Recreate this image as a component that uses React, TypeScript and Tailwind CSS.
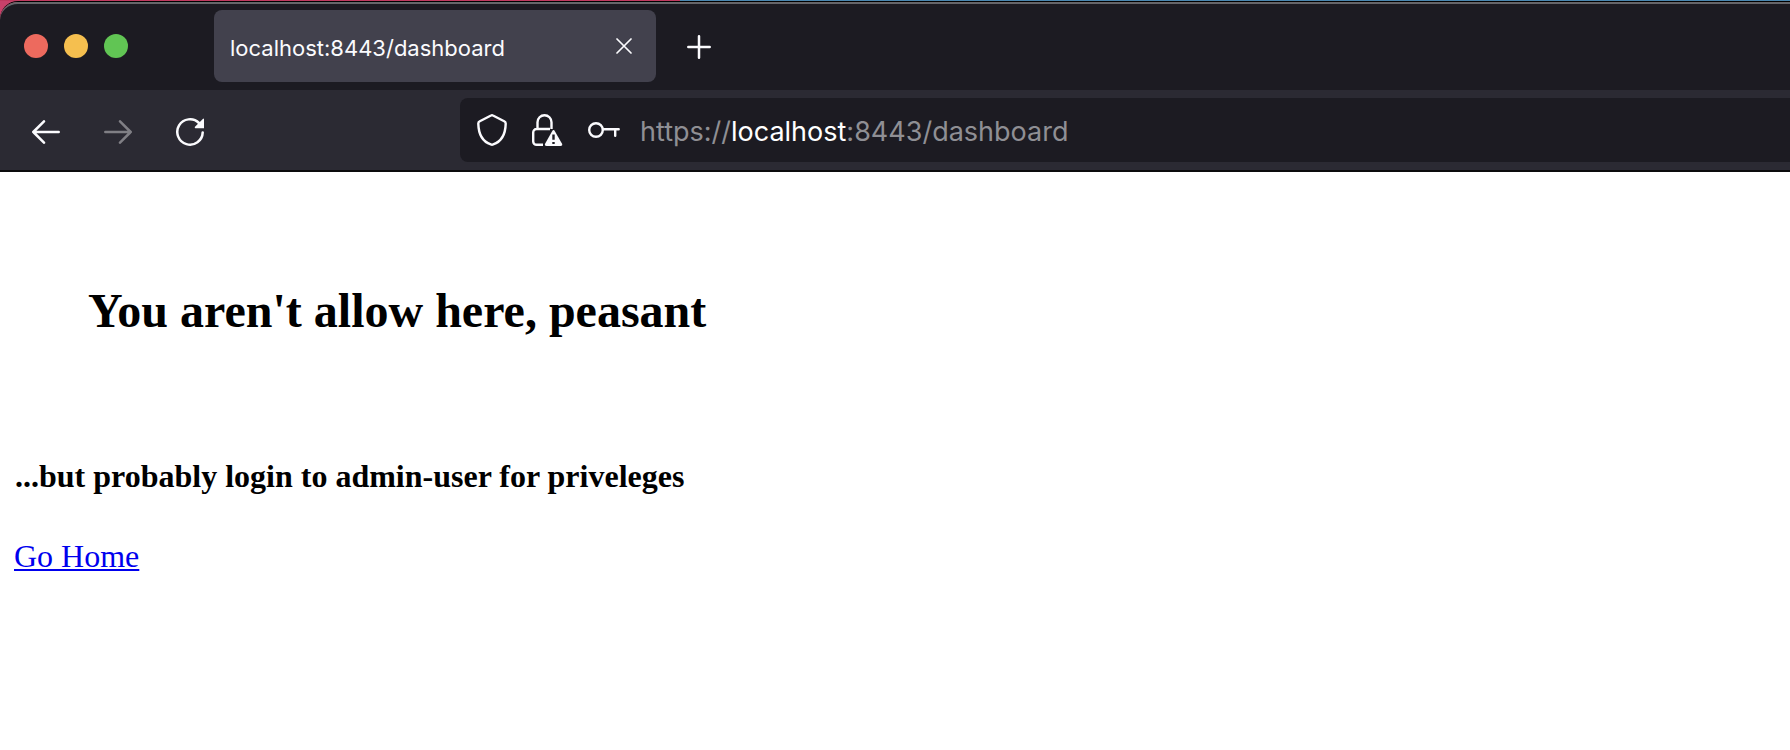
import React from "react";

type IconProps = { className?: string };

function BackIcon({ className }: IconProps) {
  return (
    <svg viewBox="0 0 28 24" className={className} fill="none" stroke="currentColor" strokeWidth="2.5" strokeLinecap="round" strokeLinejoin="round" aria-hidden="true">
      <path d="M26.700 12H1.300M12 1.300 1.300 12 12 22.700" />
    </svg>
  );
}

function ForwardIcon({ className }: IconProps) {
  return (
    <svg viewBox="0 0 28 24" className={className} fill="none" stroke="currentColor" strokeWidth="2.5" strokeLinecap="round" strokeLinejoin="round" aria-hidden="true">
      <path d="M1.3 12h25.4M16 1.3 26.7 12 16 22.7" />
    </svg>
  );
}

function ReloadIcon({ className }: IconProps) {
  return (
    <svg viewBox="0 0 28 28" className={className} fill="none" aria-hidden="true">
      <path d="M26.7 14.4A12.7 12.7 0 1 1 23 5" stroke="currentColor" strokeWidth="2.5" strokeLinecap="round" />
      <path d="M28 1v9.200h-8.600q-1.200-.3-.4-1.400L26.800.9Q27.600.2 28 1Z" fill="currentColor" />
    </svg>
  );
}

function ShieldIcon({ className }: IconProps) {
  return (
    <svg viewBox="0 0 30 32" className={className} fill="none" stroke="currentColor" strokeWidth="2.4" strokeLinejoin="round" aria-hidden="true">
      <path d="M15 1.2Q15.5 1.2 16 1.5L27.2 7.2Q28.8 8 28.7 9.6C28.5 18 26 27 16.2 30.4Q15 31 13.8 30.4C4 27 1.5 18 1.3 9.6Q1.2 8 2.8 7.2L14 1.5Q14.5 1.2 15 1.2Z" />
    </svg>
  );
}

function LockWarningIcon({ className }: IconProps) {
  return (
    <svg viewBox="0 0 32 32" className={className} fill="none" aria-hidden="true">
      <path d="M5.500 15V8.200a7 7 0 0 1 14 0V15M11 30.800H4.600A3.400 3.400 0 0 1 1.200 27.400V18.400A3.400 3.400 0 0 1 4.600 15H18" stroke="currentColor" strokeWidth="2.4" strokeLinejoin="round" />
      <path d="M20 17.400q1.500-2.600 3 0l6.900 12.200q1.200 2.400-1.500 2.400H14.700q-2.700 0-1.500-2.400Z" fill="currentColor" />
      <path d="M21.500 20.500v5.300M21.500 27.900v2.100" stroke="#1c1b22" strokeWidth="2.4" />
    </svg>
  );
}

function KeyIcon({ className }: IconProps) {
  return (
    <svg viewBox="0 0 32 16" className={className} fill="none" stroke="currentColor" strokeWidth="2.4" strokeLinecap="round" strokeLinejoin="round" aria-hidden="true">
      <circle cx="8" cy="8" r="6.8" />
      <path d="M15 7.200h15.700M27.200 7.200v6.500" />
    </svg>
  );
}

function CloseIcon({ className }: IconProps) {
  return (
    <svg viewBox="0 0 16 16" className={className} stroke="currentColor" strokeWidth="1.7" strokeLinecap="round" aria-hidden="true">
      <path d="m1 1 14 14M15 1 1 15" />
    </svg>
  );
}

function PlusIcon({ className }: IconProps) {
  return (
    <svg viewBox="0 0 24 24" className={className} stroke="currentColor" strokeWidth="2.5" strokeLinecap="round" aria-hidden="true">
      <path d="M12 1.3v21.400M1.300 12h21.400" />
    </svg>
  );
}

function TabStrip() {
  return (
    <div className="flex h-[88px] items-start rounded-tl-[18px] border-t-2 border-[#66666a] bg-[#1c1b22] pt-1.5 pl-6">
      <div className="mt-6 flex shrink-0 gap-4">
        <button aria-label="Close window" className="size-6 rounded-full bg-[#ed6a5e]" />
        <button aria-label="Minimize window" className="size-6 rounded-full bg-[#f5bf4f]" />
        <button aria-label="Zoom window" className="size-6 rounded-full bg-[#61c554]" />
      </div>
      <div className="ml-[86px] flex h-[72px] w-[442px] shrink-0 items-center justify-between rounded-lg bg-[#42414d] pr-6 pl-4">
        <span className="pt-1 text-[22px] leading-8">localhost:8443/dashboard</span>
        <button aria-label="Close tab">
          <CloseIcon className="size-4" />
        </button>
      </div>
      <button aria-label="New tab" className="mt-[25px] ml-[31px] shrink-0">
        <PlusIcon className="size-6" />
      </button>
    </div>
  );
}

function Toolbar() {
  return (
    <div className="flex h-[82px] items-center border-b-2 border-[#0c0c0d] bg-[#2b2a33] pl-8">
      <nav aria-label="History" className="flex shrink-0 items-center gap-11 pt-1">
        <button aria-label="Back">
          <BackIcon className="h-6 w-7" />
        </button>
        <button aria-label="Forward" disabled className="text-[#807f85]">
          <ForwardIcon className="h-6 w-7" />
        </button>
        <button aria-label="Reload">
          <ReloadIcon className="size-7" />
        </button>
      </nav>
      <div className="ml-64 flex h-16 min-w-0 grow items-center rounded-l-lg bg-[#1c1b22] pl-[17px]">
        <button aria-label="Tracking protection">
          <ShieldIcon className="h-8 w-[30px]" />
        </button>
        <button aria-label="Connection is not secure" className="ml-[25px]">
          <LockWarningIcon className="size-8" />
        </button>
        <button aria-label="Saved logins" className="ml-6">
          <KeyIcon className="h-4 w-8" />
        </button>
        <div
          role="textbox"
          aria-label="Address"
          contentEditable
          suppressContentEditableWarning
          spellCheck={false}
          className="ml-5 grow pt-1 text-[27px] leading-8 whitespace-nowrap text-[#8f8f94] outline-none"
        >
          https://<span className="text-white">localhost</span>:8443/dashboard
        </div>
      </div>
    </div>
  );
}

export default function App() {
  return (
    <div className="min-h-screen bg-white">
      <header className="bg-[#c9416a] font-['Inter',sans-serif] text-[#fbfbfe]">
        <div className="flex h-px">
          <div className="w-[38%] bg-[#c0395f]" />
          <div className="grow bg-[#4a87b0]" />
        </div>
        <div className="rounded-tl-[18px] border-t border-black">
          <TabStrip />
        </div>
        <Toolbar />
      </header>
      <main className="px-3.5 pt-28 font-['Liberation_Serif',serif] text-[32px] leading-9 text-black">
        <h1 className="pl-[74px] text-[48px] leading-[54px] font-bold">You aren't allow here, peasant</h1>
        <h2 className="mt-30 pl-px font-bold">...but probably login to admin-user for priveleges</h2>
        <p className="mt-11">
          <a href="/" className="text-[#0000ee] underline decoration-2 underline-offset-2">Go Home</a>
        </p>
      </main>
    </div>
  );
}
